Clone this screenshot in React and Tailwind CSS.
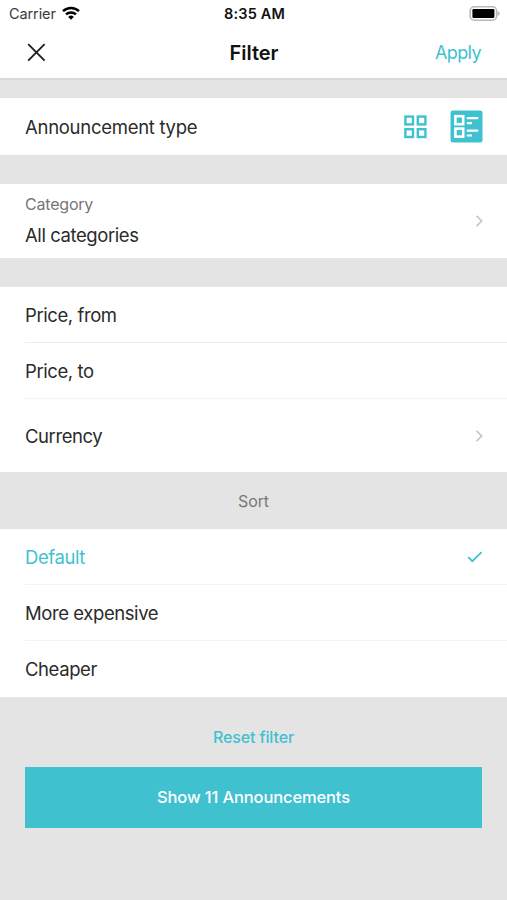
import { useState } from "react";

const sortOptions = ["Default", "More expensive", "Cheaper"];

function StatusBar() {
  return (
    <div className="grid h-[27px] grid-cols-3 items-center pl-[9px] pr-[7px] text-[14.5px] leading-[27px]">
      <div className="flex items-center gap-[6px] text-[#3a3a3a]">
        <span className="tracking-[-0.1px]">Carrier</span>
        <svg width="18" height="14" viewBox="0 0 18 14" className="-mt-px" fill="none" stroke="#000" strokeWidth="2.5">
          <path d="M1 5.1a11.6 11.6 0 0 1 16 0" />
          <path d="M4 8.4a7.4 7.4 0 0 1 10 0" />
          <path d="M9 13.8 6.2 10.9a4.1 4.1 0 0 1 5.6 0Z" fill="#000" stroke="none" />
        </svg>
      </div>
      <span className="text-center font-semibold tracking-[0.15px] text-[#111]">8:35 AM</span>
      <svg className="-mt-px justify-self-end" width="31" height="15" viewBox="0 0 31 15">
        <rect x="1.2" y="0.8" width="26.4" height="13.4" rx="4" fill="#fff" stroke="#b9b9b9" strokeWidth="1.6" />
        <rect x="3.4" y="3" width="22" height="9" rx="1.2" fill="#000" />
        <path d="M28.6 5v5c1.4-.5 2.1-1.4 2.1-2.5s-.7-2-2.1-2.500Z" fill="#b9b9b9" />
      </svg>
    </div>
  );
}

function ChevronIcon() {
  return (
    <svg width="8" height="12" viewBox="0 0 8 12" fill="none" stroke="#c7c7c7" strokeWidth="1.8">
      <path d="M1.6 0.8 6.6 6 1.6 11.2" />
    </svg>
  );
}

function GridIcon() {
  return (
    <svg width="23" height="24" viewBox="0 0 23 24" fill="none" stroke="#3fc1d0" strokeWidth="2.4">
      <rect x="1.4" y="1.6" width="7.6" height="7.8" />
      <rect x="13.8" y="1.6" width="7.6" height="7.8" />
      <rect x="1.4" y="14.2" width="7.6" height="7.8" />
      <rect x="13.8" y="14.2" width="7.6" height="7.8" />
    </svg>
  );
}

function ListIcon() {
  return (
    <svg width="33" height="33" viewBox="0 0 33 33" fill="none">
      <rect x="0.5" y="0.5" width="32" height="32" rx="2.5" fill="#3fc1d0" />
      <g stroke="#fff" strokeWidth="2.6">
        <rect x="5.4" y="6.2" width="7.8" height="8" />
        <rect x="5.4" y="18.6" width="7.800" height="8" />
        <path d="M16.800 8.200h11.400M16.800 13.200h5.200M16.800 20.700h11.400M16.800 25.500h5.200" strokeWidth="2.200" />
      </g>
    </svg>
  );
}

export default function App() {
  const [view, setView] = useState("list");
  const [sort, setSort] = useState("Default");

  return (
    <div className="flex h-[900px] w-[507px] flex-col overflow-hidden bg-[#e4e4e4] font-['Inter','Liberation_Sans',sans-serif] text-[18.5px] tracking-[-0.42px] text-[#2b2b2b]">
      <header className="h-[80px] shrink-0 border-b-2 border-[#d9d9d9] bg-white">
        <StatusBar />
        <div className="grid h-[51px] grid-cols-3 items-center pl-[27px] pr-[26px]">
          <button aria-label="Close">
            <svg width="19" height="19" viewBox="0 0 19 19" fill="none" stroke="#1c1c22" strokeWidth="1.800">
              <path d="M1.200 1.200 17.600 17.600M17.600 1.200 1.200 17.600" />
            </svg>
          </button>
          <h1 className="text-center text-[20px] font-semibold tracking-[0px] text-[#111]">Filter</h1>
          <button className="justify-self-end text-[18px] tracking-[-0.6px] text-[#3fc1d0]">Apply</button>
        </div>
      </header>

      <section className="mt-[18px] flex h-[57px] shrink-0 items-center justify-between bg-white pl-[25px] pr-6">
        <span className="pt-0.5 tracking-[-0.28px]">Announcement type</span>
        <div className="flex items-center gap-[23px]">
          <button aria-label="Grid" aria-pressed={view === "grid"} onClick={() => setView("grid")}>
            <GridIcon />
          </button>
          <button aria-label="List" aria-pressed={view === "list"} onClick={() => setView("list")}>
            <ListIcon />
          </button>
        </div>
      </section>

      <section className="mt-[29px] flex h-[74px] shrink-0 items-center justify-between bg-white pl-[25px] pr-6">
        <div className="pb-0.5">
          <p className="text-[16px] leading-[30px] tracking-[-0.2px] text-[#777]">Category</p>
          <p className="leading-[32px]">All categories</p>
        </div>
        <ChevronIcon />
      </section>

      <section className="mt-[29px] shrink-0 bg-white pl-[25px]">
        <div className="flex h-14 items-center border-b border-[#ececec] pt-0.5">Price, from</div>
        <div className="flex h-14 items-center border-b border-[#f3f3f3] pt-0.5">Price, to</div>
        <div className="flex h-[73px] items-center justify-between pr-6">
          <span className="pt-0.5">Currency</span>
          <ChevronIcon />
        </div>
      </section>

      <p className="h-[57px] shrink-0 text-center text-[16px] leading-[58px] tracking-[-0.1px] text-[#777]">Sort</p>

      <section className="shrink-0 bg-white pl-[25px]">
        {sortOptions.map((option) => (
          <button
            key={option}
            onClick={() => setSort(option)}
            className={`flex h-14 w-full items-center justify-between border-b border-[#f3f3f3] pr-6 last:border-b-0 ${
              sort === option ? "text-[#3fc1d0]" : ""
            }`}
          >
            <span className="pt-0.5">{option}</span>
            {sort === option && (
              <svg width="16" height="12" viewBox="0 0 16 12" fill="none" stroke="#3fc1d0" strokeWidth="1.800">
                <path d="M1.200 6.200 5.300 10.200 14.600 1.200" />
              </svg>
            )}
          </button>
        ))}
      </section>

      <footer className="flex flex-col px-[25px] pt-[26px]">
        <button className="self-center text-[16px] leading-7 font-medium tracking-[-0.13px] text-[#3fc1d0]">
          Reset filter
        </button>
        <button className="mt-4 h-[61px] bg-[#3fc1d0] pb-px text-[16.5px] font-medium tracking-[-0.13px] text-white">
          Show 11 Announcements
        </button>
      </footer>
    </div>
  );
}
